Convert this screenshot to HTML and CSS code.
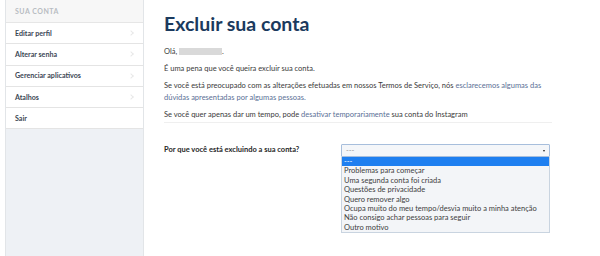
FILE: index.html
```html
<!DOCTYPE html>
<html lang="pt-BR">
<head>
<meta charset="utf-8">
<title>Excluir sua conta</title>
<link rel="stylesheet" href="styles.css">
</head>
<body>
<div class="page">
  <aside class="sidebar">
    <div class="side-head">SUA CONTA</div>
    <ul class="menu">
      <li><span>Editar perfil</span><i class="chev"></i></li>
      <li><span>Alterar senha</span><i class="chev"></i></li>
      <li><span>Gerenciar aplicativos</span><i class="chev"></i></li>
      <li><span>Atalhos</span><i class="chev"></i></li>
      <li><span>Sair</span></li>
    </ul>
  </aside>
  <main class="main">
    <h1 class="title">Excluir sua conta</h1>
    <p class="p">Olá, <span class="blur"></span>.</p>
    <p class="p">É uma pena que você queira excluir sua conta.</p>
    <p class="p">Se você está preocupado com as alterações efetuadas em nossos Termos de Serviço, nós <a class="link">esclarecemos algumas das dúvidas apresentadas por algumas pessoas.</a></p>
    <p class="p">Se você quer apenas dar um tempo, pode <a class="link">desativar temporariamente</a> sua conta do Instagram</p>
    <hr class="sep">
    <div class="row">
      <label class="label">Por que você está excluindo a sua conta?</label>
      <div class="select">
        <div class="sel-box"><span>---</span><i class="arrow"></i></div>
        <ul class="options">
          <li class="on">---</li>
          <li>Problemas para começar</li>
          <li>Uma segunda conta foi criada</li>
          <li>Questões de privacidade</li>
          <li>Quero remover algo</li>
          <li>Ocupa muito do meu tempo/desvia muito a minha atenção</li>
          <li>Não consigo achar pessoas para seguir</li>
          <li>Outro motivo</li>
        </ul>
      </div>
    </div>
  </main>
</div>
</body>
</html>
```
FILE: styles.css
```css
html, body { margin: 0; padding: 0; background: #fff; }
body { font-family: Lato, "Open Sans", sans-serif; color: #333; }
.page { display: flex; height: 256px; padding-left: 5px; }
.sidebar {
  width: 137px; flex: none; background: #eef1f5;
  border-left: 1px solid #e2e5e8; border-right: 1px solid #e2e5e8;
}
.side-head {
  height: 22px; line-height: 22px; padding-left: 9px;
  background: #f7f7f7; color: #b8bcc2; font-size: 7px; font-weight: 700;
  border-bottom: 1px solid #e6e6e6; letter-spacing: 0.5px;
}
.menu { list-style: none; margin: 0; padding: 0; }
.menu li {
  height: 20.3px; display: flex; align-items: center; justify-content: space-between;
  padding: 0 9px; background: #fff; border-bottom: 1px solid #e4e4e4;
  font-size: 7.1px; font-weight: 700; color: #3b4654;
}
.chev {
  width: 3px; height: 3px; border-top: 1px solid #e8e8e8; border-right: 1px solid #e8e8e8;
  transform: rotate(45deg); margin-right: 1px;
}
.main { flex: 1; padding: 0 48px 0 20px; }
.title {
  margin: 13px 0 0; font-size: 19.5px; font-weight: 700; color: #1b3a5e; line-height: 22px;
}
.p { margin: 5px 0 0; font-size: 7.5px; line-height: 12px; color: #3a3a3a; }
.title + .p { margin-top: 11px; }
.blur { display: inline-block; width: 43px; height: 7px; background: #d9d9d9; vertical-align: -1px; }
.link { color: #5a6f96; }
.sep { border: 0; border-top: 1px solid #efefef; margin: 1px 0 0; }
.row { display: flex; align-items: flex-start; margin-top: 21px; }
.label { width: 177px; font-size: 7.5px; font-weight: 700; color: #262626; line-height: 12px; }
.select { width: 209px; font-size: 7.5px; }
.sel-box {
  height: 11px; border: 1px solid #a7bedc; border-radius: 1px; background: #f4f6f9;
  display: flex; align-items: center; justify-content: space-between; padding: 0 4px; color: #999;
}
.arrow { width: 0; height: 0; border-left: 1.5px solid transparent; border-right: 1.5px solid transparent; border-top: 2.5px solid #222; }
.options {
  list-style: none; margin: 0; padding: 0; background: #f3f5f8;
  border: 1px solid #c9d4e0; border-top: 0;
}
.options li { height: 9.4px; line-height: 9.4px; padding-left: 2px; color: #404040; }
.options li.on { background: #1e7ff0; color: #fff; }
```
